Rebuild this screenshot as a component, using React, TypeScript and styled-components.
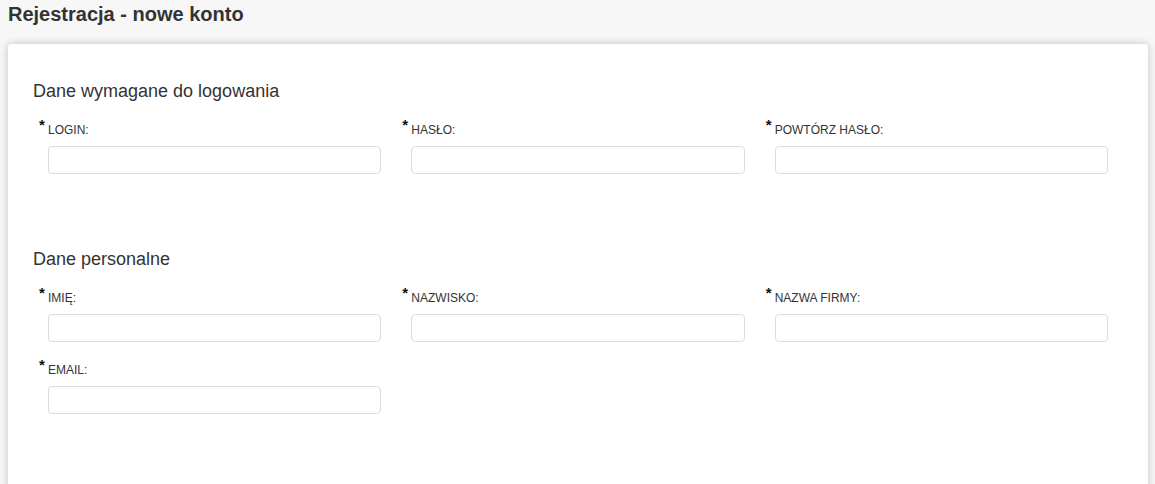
import React from 'react'
import styled, { createGlobalStyle } from 'styled-components'

const GlobalStyle = createGlobalStyle`
  html, body {
    margin: 0;
    padding: 0;
    background: #f7f7f7;
    font-family: "Liberation Sans", Arial, sans-serif;
    color: #333;
  }
`

const Page = styled.div`
  padding-bottom: 40px;
`

const Title = styled.h1`
  margin: 0;
  padding: 0 8px;
  font-size: 20px;
  line-height: 28px;
  font-weight: bold;
  color: #333;
`

const Card = styled.div`
  margin: 16px 7px 0 8px;
  padding: 35px 25px 80px;
  background: #fff;
  border-radius: 4px;
  box-shadow: 0 0 8px rgba(0, 0, 0, 0.22);
`

const Section = styled.section`
  & + & {
    margin-top: 53px;
  }
`

const SectionTitle = styled.h2`
  margin: 0 0 19px;
  font-size: 18px;
  line-height: 24px;
  font-weight: normal;
  color: #333;
`

const Grid = styled.div`
  display: grid;
  grid-template-columns: repeat(3, 1fr);
`

const Field = styled.div`
  padding: 0 15px;
  margin-bottom: 20px;
`

const Label = styled.label`
  display: block;
  position: relative;
  font-size: 12px;
  line-height: 16px;
  color: #333;
  text-transform: uppercase;
  margin-bottom: 8px;
`

const Star = styled.span`
  position: absolute;
  left: -9px;
  top: -5px;
  font-size: 15px;
  font-weight: bold;
  color: #111;
`

const Input = styled.input`
  display: block;
  box-sizing: border-box;
  width: 100%;
  height: 28px;
  border: 1px solid #dcdcdc;
  border-radius: 4px;
  background: #fff;
  padding: 4px 8px;
  font-family: inherit;
  font-size: 13px;
  outline: none;
`

type FieldDef = { label: string; type?: string }

const loginFields: FieldDef[] = [
  { label: 'Login:' },
  { label: 'Hasło:', type: 'password' },
  { label: 'Powtórz hasło:', type: 'password' },
]

const personalFields: FieldDef[] = [
  { label: 'Imię:' },
  { label: 'Nazwisko:' },
  { label: 'Nazwa firmy:' },
  { label: 'Email:', type: 'email' },
]

const FormSection = ({ title, fields }: { title: string; fields: FieldDef[] }) => (
  <Section>
    <SectionTitle>{title}</SectionTitle>
    <Grid>
      {fields.map((f) => (
        <Field key={f.label}>
          <Label>
            <Star>*</Star>
            {f.label}
          </Label>
          <Input type={f.type || 'text'} />
        </Field>
      ))}
    </Grid>
  </Section>
)

const App = () => (
  <Page>
    <GlobalStyle />
    <Title>Rejestracja - nowe konto</Title>
    <Card>
      <FormSection title="Dane wymagane do logowania" fields={loginFields} />
      <FormSection title="Dane personalne" fields={personalFields} />
    </Card>
  </Page>
)

export default App
